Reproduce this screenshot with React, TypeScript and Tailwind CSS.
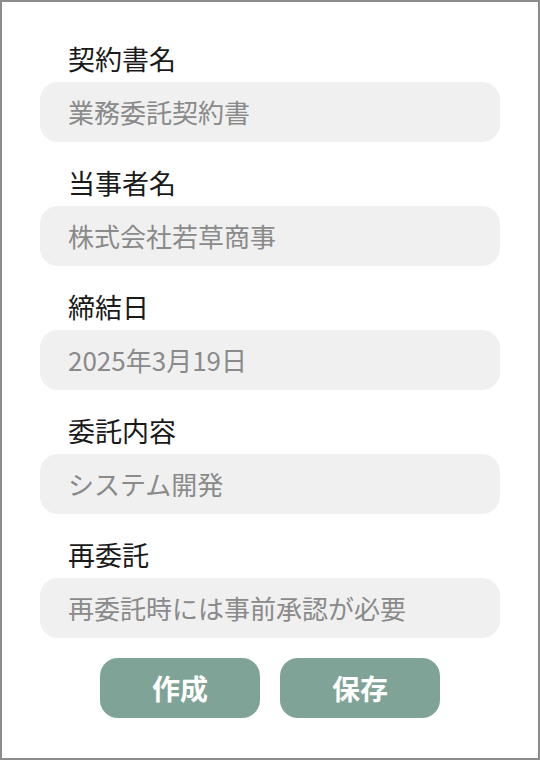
import React from "react";

const fields = [
  { label: "契約書名", value: "業務委託契約書" },
  { label: "当事者名", value: "株式会社若草商事" },
  { label: "締結日", value: "2025年3月19日" },
  { label: "委託内容", value: "システム開発" },
  { label: "再委託", value: "再委託時には事前承認が必要" },
];

export default function App() {
  return (
    <div
      className="w-[540px] h-[760px] border-2 border-[#8c8c8c] bg-white px-[38px] pt-[40px] pb-[40px] flex flex-col"
      style={{ fontFamily: '"Noto Sans CJK JP", "Noto Sans", sans-serif' }}
    >
      <div className="flex flex-col gap-6">
        {fields.map((f) => (
          <div key={f.label} className="flex flex-col">
            <div className="h-8 mb-2 pl-7 flex items-center text-[27px] font-normal text-[#1a1a1a] leading-none">
              {f.label}
            </div>
            <div className="h-[60px] rounded-[18px] bg-[#f0f0f0] pl-7 flex items-center text-[26px] text-[#8a8a8a] leading-none">
              {f.value}
            </div>
          </div>
        ))}
      </div>
      <div className="mt-5 flex justify-center gap-5">
        <button className="w-[160px] h-[60px] rounded-[18px] bg-[#7fa396] text-white text-[28px] font-bold leading-none">
          作成
        </button>
        <button className="w-[160px] h-[60px] rounded-[18px] bg-[#7fa396] text-white text-[28px] font-bold leading-none">
          保存
        </button>
      </div>
    </div>
  );
}
